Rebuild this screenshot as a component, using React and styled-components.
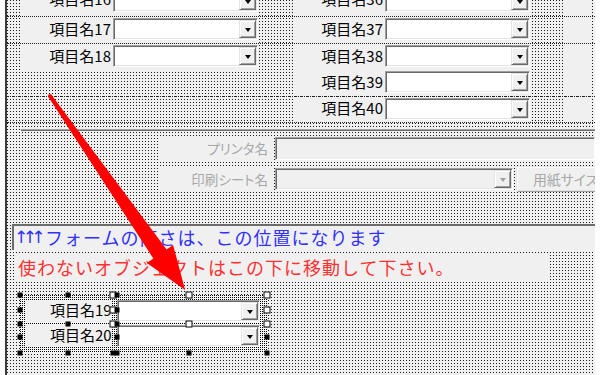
import React from 'react';
import styled, { createGlobalStyle, css } from 'styled-components';

const GlobalStyle = createGlobalStyle`
  html, body { margin: 0; padding: 0; background: #fff; }
  body { font-family: "Noto Sans CJK JP", "Noto Sans", sans-serif; }
`;

const gridDots = css`
  background: conic-gradient(from 0deg at 1px 1px, transparent 75%, #1a1a1a 0) 0 0 / 3px 3px, #f0f0f0;
`;

const Page = styled.div`
  position: relative;
  width: 601px;
  height: 375px;
  overflow: hidden;
  background: #fff;
  padding-left: 5px;
  box-sizing: border-box;
`;

const Canvas = styled.div`
  width: 590px;
  height: 100%;
  box-sizing: border-box;
  border-left: 2px solid #3a3a3a;
  overflow: hidden;
  display: flex;
  flex-direction: column;
  ${gridDots}
`;

/* ---------- detail rows ---------- */
const Detail = styled.div`
  margin-top: -11px;
  display: flex;
  flex-direction: column;
`;

const Row = styled.div`
  display: flex;
  flex: none;
  height: ${p => p.$h}px;
  box-sizing: border-box;
  border-top: ${p => (p.$line ? '1px dotted #222' : '0')};
  border-bottom: ${p => (p.$bottom ? '1px dotted #222' : '0')};
`;

const Gap = styled.div`
  flex: none;
  width: ${p => p.$w}px;
`;

const Cell = styled.div`
  flex: none;
  width: ${p => p.$w}px;
  display: flex;
  align-items: flex-start;
  background: ${p => (p.$filled ? '#f0f0f0' : 'transparent')};
`;

const FieldLabel = styled.div`
  flex: none;
  width: ${p => p.$w}px;
  height: 100%;
  box-sizing: border-box;
  display: flex;
  align-items: center;
  justify-content: flex-end;
  padding: 0 2px ${p => p.$lift ?? 4}px 0;
  font-size: 15px;
  color: #000;
  white-space: nowrap;
`;

const ComboBox = styled.div`
  flex: none;
  box-sizing: border-box;
  width: ${p => p.$w}px;
  height: 22px;
  margin-top: ${p => p.$mt ?? 1}px;
  display: flex;
  justify-content: flex-end;
  padding: 1px;
  background: ${p => (p.$disabled ? '#f0f0f0' : '#fff')};
  border: 1px solid;
  border-color: #a0a0a0 #fff #fff #a0a0a0;
  box-shadow: inset 1px 1px 0 #696969, inset -1px -1px 0 #e3e3e3;
`;

const DropButton = styled.div`
  box-sizing: border-box;
  width: 17px;
  height: 100%;
  background: #f0f0f0;
  border: 1px solid;
  border-color: #e3e3e3 #696969 #696969 #e3e3e3;
  box-shadow: inset 1px 1px 0 #fff, inset -1px -1px 0 #a0a0a0;
  display: flex;
  align-items: center;
  justify-content: center;
  &::after {
    content: '';
    margin-top: 2px;
    border-left: 3.5px solid transparent;
    border-right: 3.5px solid transparent;
    border-top: 4px solid ${p => (p.$disabled ? '#a0a0a0' : '#000')};
  }
`;

const Combo = ({ w, disabled, mt }) => (
  <ComboBox $w={w} $disabled={disabled} $mt={mt}>
    <DropButton $disabled={disabled} />
  </ComboBox>
);

/* ---------- printer settings ---------- */
const Separator = styled.div`
  flex: none;
  margin: 6px 0 0 14px;
  height: 2px;
  box-sizing: border-box;
  border-top: 1px solid #a0a0a0;
  border-bottom: 1px solid #6d6d6d;
`;

const FieldRow = styled.div`
  flex: none;
  display: flex;
  align-items: flex-start;
  height: ${p => p.$h}px;
  margin-top: ${p => p.$mt}px;
  padding-left: 153px;
`;

const MutedLabel = styled.div`
  flex: none;
  width: 112px;
  height: 100%;
  box-sizing: border-box;
  display: flex;
  align-items: center;
  justify-content: flex-end;
  padding: 0 4px 2px 0;
  background: #f0f0f0;
  color: #a8a8a8;
  font-size: 13.5px;
  font-feature-settings: "palt";
  white-space: nowrap;
`;

const TextBox = styled.div`
  flex: 1;
  margin-left: 3px;
  height: 100%;
  box-sizing: border-box;
  background: #f0f0f0;
  border: 1px solid;
  border-color: #a0a0a0 #fff #fff #a0a0a0;
  box-shadow: inset 1px 1px 0 #696969;
`;

const SheetCombo = styled.div`
  margin-left: 3px;
  display: flex;
`;

const PaperButton = styled.div`
  flex: none;
  width: 100px;
  height: 100%;
  margin-left: 4px;
  box-sizing: border-box;
  padding: 0 0 2px 15px;
  display: flex;
  align-items: center;
  background: #f0f0f0;
  border: 1px solid;
  border-color: #fff #a0a0a0 #a0a0a0 #fff;
  box-shadow: inset -1px -1px 0 #e3e3e3, -1px -1px 0 #e3e3e3;
  color: #a8a8a8;
  font-size: 14px;
  font-feature-settings: "palt";
  letter-spacing: -0.2px;
  white-space: nowrap;
`;

/* ---------- notes ---------- */
const HeightNote = styled.div`
  flex: none;
  margin: 32px 0 0 5px;
  height: 26px;
  box-sizing: border-box;
  display: flex;
  align-items: center;
  padding-bottom: 2px;
  background: #f0f0f0;
  border-top: 2px solid #6d6d6d;
  border-left: 2px solid #6d6d6d;
  color: #3030ff;
  font-size: 18px;
  letter-spacing: 1px;
  white-space: nowrap;
`;

const Arrows = styled.span`
  font-family: "DejaVu Sans", sans-serif;
  font-size: 17px;
  letter-spacing: -5.6px;
  margin-right: 5px;
`;

const MoveNote = styled.div`
  flex: none;
  width: 536px;
  height: 29px;
  margin: 3px 0 0 7px;
  box-sizing: border-box;
  display: flex;
  align-items: center;
  padding: 0 0 1px 4px;
  background: #f0f0f0;
  color: #ff3030;
  font-size: 18px;
  letter-spacing: 1px;
  white-space: nowrap;
`;

/* ---------- selected controls ---------- */
const SelGroup = styled.div`
  position: relative;
  flex: none;
  width: 247px;
  height: 58px;
  margin: 13px 0 0 13px;
  display: grid;
  grid-template-columns: 93px 154px;
  grid-template-rows: 28px 30px;
  background: conic-gradient(from 0deg at 1px 1px, transparent 75%, #000 0) 0 0 / 2px 2px, #f4f4f4;
`;

const SelCell = styled.div`
  display: flex;
  padding: ${p => p.$pad};
  min-width: 0;
`;

const SelLabel = styled.div`
  flex: 1;
  display: flex;
  align-items: center;
  padding: 0 0 3px 25px;
  background: #f0f0f0;
  font-size: 15px;
  white-space: nowrap;
`;

const Handle = styled.span`
  position: absolute;
  z-index: 2;
  box-sizing: border-box;
  width: ${p => (p.$hollow ? 7 : 5)}px;
  height: ${p => (p.$hollow ? 7 : 5)}px;
  left: ${p => p.$x}px;
  top: ${p => p.$y}px;
  transform: translate(-50%, -50%);
  background: ${p => (p.$hollow ? '#fff' : '#000')};
  border: ${p => (p.$hollow ? '1px solid #000' : '0')};
`;

const ArrowLayer = styled.svg`
  position: absolute;
  left: 0;
  top: 0;
  z-index: 5;
  pointer-events: none;
`;

const detailRows = [
  { h: 27, left: '16', right: '36', lift: 8 },
  { h: 27, line: true, left: '17', right: '37' },
  { h: 27, line: true, left: '18', right: '38' },
  { h: 26, right: '39' },
  { h: 27, line: true, bottom: true, right: '40' },
];

const handles = [
  [0, 0], [48, 0], [93, 0, 1], [97, 0], [169, 0, 1], [247, 0, 1],
  [0, 15], [93, 15, 1], [97, 15], [247, 15, 1],
  [0, 29], [48, 29], [93, 29, 1], [97, 29], [169, 29, 1], [247, 29, 1],
  [0, 42], [97, 42], [247, 42],
  [0, 58], [48, 58], [93, 58], [97, 58], [169, 58], [247, 58],
];

const App = () => (
  <Page>
    <GlobalStyle />
    <Canvas>
      <Detail>
        {detailRows.map(r => (
          <Row key={r.right} $h={r.h} $line={r.line} $bottom={r.bottom}>
            <Gap $w={13} />
            <Cell $w={238} $filled={!!r.left}>
              {r.left && (
                <>
                  <FieldLabel $w={93} $lift={r.lift}>項目名{r.left}</FieldLabel>
                  <Combo w={145} />
                </>
              )}
            </Cell>
            <Gap $w={35} />
            <Cell $w={239} $filled>
              <FieldLabel $w={92} $lift={r.lift}>項目名{r.right}</FieldLabel>
              <Combo w={145} />
            </Cell>
            <Gap $w={33} />
            <Cell $w={27} $filled />
          </Row>
        ))}
      </Detail>

      <Separator />

      <FieldRow $h={23} $mt={6}>
        <MutedLabel>プリンタ名</MutedLabel>
        <TextBox />
      </FieldRow>

      <FieldRow $h={25} $mt={7}>
        <MutedLabel>印刷シート名</MutedLabel>
        <SheetCombo>
          <Combo w={238} disabled />
        </SheetCombo>
        <PaperButton>用紙サイズ変更</PaperButton>
      </FieldRow>

      <HeightNote>
        <Arrows>↑↑↑</Arrows>フォームの高さは、この位置になります
      </HeightNote>

      <MoveNote>使わないオブジェクトはこの下に移動して下さい。</MoveNote>

      <SelGroup>
        <SelCell $pad="5px 3px 1px 5px">
          <SelLabel>項目名19</SelLabel>
        </SelCell>
        <SelCell $pad="5px 7px 1px 4px">
          <Combo w={143} mt={0} />
        </SelCell>
        <SelCell $pad="2px 3px 6px 5px">
          <SelLabel>項目名20</SelLabel>
        </SelCell>
        <SelCell $pad="2px 7px 6px 4px">
          <Combo w={143} mt={0} />
        </SelCell>
        {handles.map(([x, y, hollow]) => (
          <Handle key={`${x}-${y}`} $x={x} $y={y} $hollow={!!hollow} />
        ))}
      </SelGroup>
    </Canvas>

    <ArrowLayer width="601" height="375" viewBox="0 0 601 375">
      <circle cx="50" cy="96" r="2" fill="#ff0000" />
      <polygon
        fill="#ff0000"
        points="51.6,94.9 166.6,249.4 173.1,244.9 185.1,290.1 146.9,263.1 153.4,258.6 48.4,97.1"
      />
    </ArrowLayer>
  </Page>
);

export default App;
